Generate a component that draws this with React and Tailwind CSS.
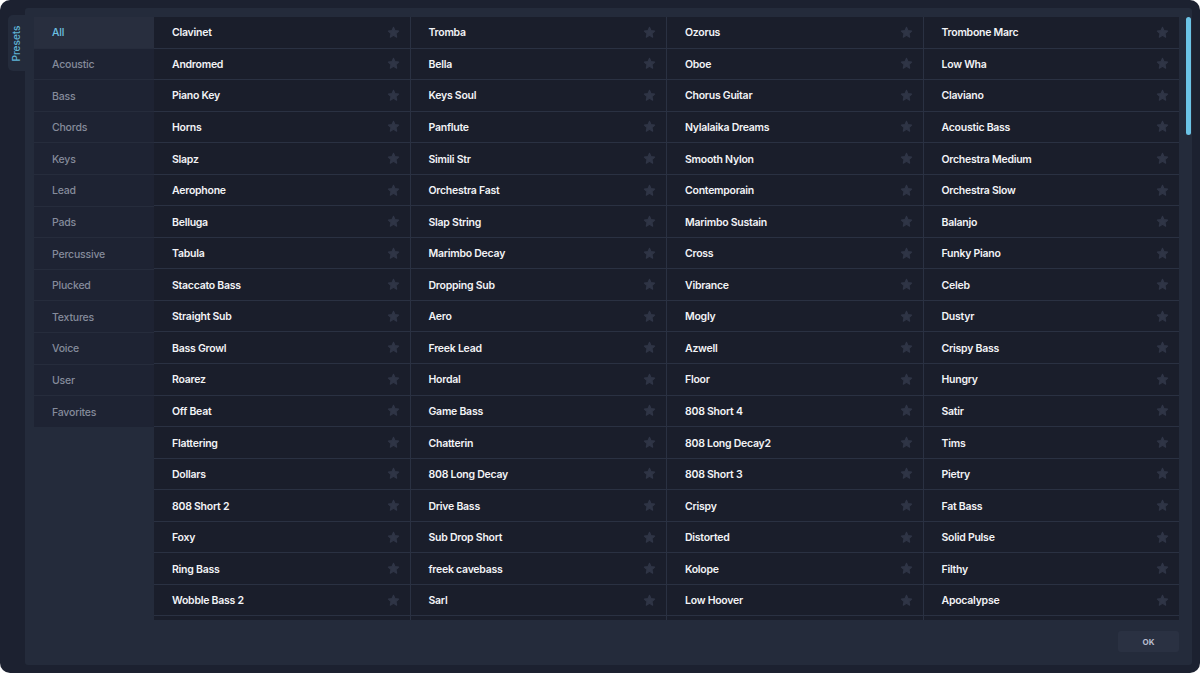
import { useState } from "react";

/* Preset browser — categories left, 4-col list of presets right */

const CATEGORIES = [
  "All", "Acoustic", "Bass", "Chords", "Keys", "Lead", "Pads",
  "Percussive", "Plucked", "Textures", "Voice", "User", "Favorites",
];

const COLS = [
  ["Clavinet", "Andromed", "Piano Key", "Horns", "Slapz", "Aerophone", "Belluga", "Tabula", "Staccato Bass", "Straight Sub", "Bass Growl", "Roarez", "Off Beat", "Flattering", "Dollars", "808 Short 2", "Foxy", "Ring Bass", "Wobble Bass 2", ""],
  ["Tromba", "Bella", "Keys Soul", "Panflute", "Simili Str", "Orchestra Fast", "Slap String", "Marimbo Decay", "Dropping Sub", "Aero", "Freek Lead", "Hordal", "Game Bass", "Chatterin", "808 Long Decay", "Drive Bass", "Sub Drop Short", "freek cavebass", "Sarl", ""],
  ["Ozorus", "Oboe", "Chorus Guitar", "Nylalaika Dreams", "Smooth Nylon", "Contemporain", "Marimbo Sustain", "Cross", "Vibrance", "Mogly", "Azwell", "Floor", "808 Short 4", "808 Long Decay2", "808 Short 3", "Crispy", "Distorted", "Kolope", "Low Hoover", ""],
  ["Trombone Marc", "Low Wha", "Claviano", "Acoustic Bass", "Orchestra Medium", "Orchestra Slow", "Balanjo", "Funky Piano", "Celeb", "Dustyr", "Crispy Bass", "Hungry", "Satir", "Tims", "Pietry", "Fat Bass", "Solid Pulse", "Filthy", "Apocalypse", ""],
];

// row-major: zip the columns
const PRESETS = COLS[0].flatMap((_, r) => COLS.map((c) => c[r]));

function StarIcon() {
  return (
    <svg width="13" height="13" viewBox="0 0 24 24" className="shrink-0">
      <path
        d="M12 2.5l2.9 6.1 6.6.8-4.9 4.6 1.3 6.6L12 17.3l-5.9 3.3 1.3-6.6-4.9-4.6 6.6-.8z"
        fill="#2f3546"
        stroke="#2f3546"
        strokeWidth="2"
        strokeLinejoin="round"
      />
    </svg>
  );
}

export default function App() {
  const [cat, setCat] = useState("All");

  return (
    <div className="w-[1200px] h-[673px] bg-white" style={{ fontFamily: "Inter, 'Noto Sans', sans-serif" }}>
      <div className="w-full h-full bg-[#1c2130] rounded-[10px] flex overflow-hidden">
        {/* side tab */}
        <div className="w-[25px] shrink-0 pt-[15px] pl-[8px]">
          <div className="w-[17px] h-[56px] bg-[#242b3b] rounded-l-[5px] flex items-center justify-center">
            <span className="-rotate-90 text-[10px] font-medium text-[#5fb3d6] whitespace-nowrap">
              Presets
            </span>
          </div>
        </div>

        {/* main panel */}
        <div className="flex-1 mt-[8px] mb-[8px] mr-[8px] bg-[#242b3b] rounded-[3px] pl-[9px] pr-[1px] pt-[9px] flex flex-col">
          <div className="flex h-[603px]">
            {/* categories */}
            <div className="w-[120px] shrink-0 self-start flex flex-col bg-[#262c3c] gap-[1px]">
              {CATEGORIES.map((c) => (
                <button
                  key={c}
                  onClick={() => setCat(c)}
                  className={`h-[30.6px] text-left pl-[18px] pt-[2px] text-[10.5px] tracking-[-0.2px] font-medium ${
                    c === cat ? "bg-[#282e3e] text-[#6cc0e2]" : "bg-[#1e2333] text-[#858b9b]"
                  }`}
                >
                  {c}
                </button>
              ))}
            </div>

            {/* presets grid */}
            <div className="w-[1025px] shrink-0 overflow-hidden">
              <div className="grid grid-cols-4 gap-[1px] bg-[#2a3142]">
                {PRESETS.map((p, i) => (
                  <div key={i} className="h-[30.56px] bg-[#1a1e2b] flex items-center justify-between pl-[18px] pr-[10px]">
                    <span className="pt-[2px] text-[10.5px] tracking-[-0.25px] font-semibold text-[#f2f3f6]">{p}</span>
                    <StarIcon />
                  </div>
                ))}
              </div>
            </div>

            {/* scrollbar */}
            <div className="ml-[7px] w-[5px]">
              <div className="h-[118px] w-[5px] rounded-full bg-[#6cc3e6]" />
            </div>
          </div>

          <div className="flex justify-end pr-[12px] pt-[11px]">
            <button className="w-[61px] h-[21px] rounded-[3px] bg-[#2a3142] text-[8px] font-bold text-[#b9bdcf]">
              OK
            </button>
          </div>
        </div>
      </div>
    </div>
  );
}
